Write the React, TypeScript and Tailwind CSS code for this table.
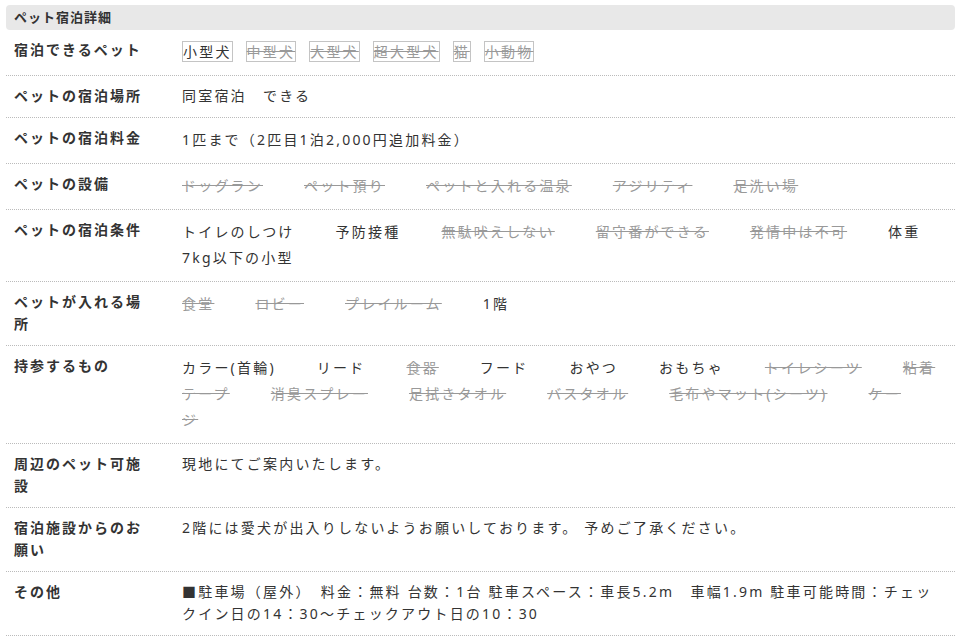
import type { ReactNode } from 'react';

type Item = { t: string; ok: boolean };

const item = (t: string, ok = true): Item => ({ t, ok });

interface Row {
  label: string;
  kind: 'tags' | 'list' | 'text';
  items?: Item[];
  text?: ReactNode;
}

const rows: Row[] = [
  {
    label: '宿泊できるペット',
    kind: 'tags',
    items: [
      item('小型犬'),
      item('中型犬', false),
      item('大型犬', false),
      item('超大型犬', false),
      item('猫', false),
      item('小動物', false),
    ],
  },
  { label: 'ペットの宿泊場所', kind: 'text', text: '同室宿泊　できる' },
  { label: 'ペットの宿泊料金', kind: 'list', items: [item('1匹まで（2匹目1泊2,000円追加料金）')] },
  {
    label: 'ペットの設備',
    kind: 'list',
    items: [
      item('ドッグラン', false),
      item('ペット預り', false),
      item('ペットと入れる温泉', false),
      item('アジリティ', false),
      item('足洗い場', false),
    ],
  },
  {
    label: 'ペットの宿泊条件',
    kind: 'list',
    items: [
      item('トイレのしつけ'),
      item('予防接種'),
      item('無駄吠えしない', false),
      item('留守番ができる', false),
      item('発情中は不可', false),
      item('体重7kg以下の小型'),
    ],
  },
  {
    label: 'ペットが入れる場所',
    kind: 'list',
    items: [item('食堂', false), item('ロビー', false), item('プレイルーム', false), item('1階')],
  },
  {
    label: '持参するもの',
    kind: 'list',
    items: [
      item('カラー(首輪)'),
      item('リード'),
      item('食器', false),
      item('フード'),
      item('おやつ'),
      item('おもちゃ'),
      item('トイレシーツ', false),
      item('粘着テープ', false),
      item('消臭スプレー', false),
      item('足拭きタオル', false),
      item('バスタオル', false),
      item('毛布やマット(シーツ)', false),
      item('ケージ', false),
    ],
  },
  { label: '周辺のペット可施設', kind: 'text', text: '現地にてご案内いたします。' },
  {
    label: '宿泊施設からのお願い',
    kind: 'text',
    text: '2階には愛犬が出入りしないようお願いしております。 予めご了承ください。',
  },
  {
    label: 'その他',
    kind: 'text',
    text: '■駐車場（屋外）　料金：無料 台数：1台 駐車スペース：車長5.2m　車幅1.9m 駐車可能時間：チェックイン日の14：30～チェックアウト日の10：30',
  },
];

function Value({ row }: { row: Row }) {
  if (row.kind === 'text') {
    return <div className="leading-[22px]">{row.text}</div>;
  }
  if (row.kind === 'tags') {
    return (
      <div className="leading-[26px]">
        {row.items!.map((it) => (
          <span
            key={it.t}
            className={
              it.ok
                ? 'mr-[13px] border border-[#c4c4c4] text-[#333]'
                : 'mr-[13px] border border-[#c4c4c4] text-[#999] line-through'
            }
          >
            {it.t}
          </span>
        ))}
      </div>
    );
  }
  // inline items: the trailing margin keeps with the last glyph, so long items wrap mid-word
  return (
    <div className="leading-[26px]">
      {row.items!.map((it) => (
        <span key={it.t} className={it.ok ? 'mr-[41px] text-[#333]' : 'mr-[41px] text-[#999] line-through'}>
          {it.t}
        </span>
      ))}
    </div>
  );
}

export default function App() {
  return (
    <div
      className="min-h-screen bg-white pt-[5px] pl-[6px] text-[14px] text-[#333]"
      style={{ fontFamily: '"Noto Sans", "Noto Sans CJK JP", sans-serif' }}
    >
      <div className="w-[949px]">
        {/* Header */}
        <div className="flex h-[25px] items-center rounded-[4px] bg-[#e8e8e8] pl-[8px] text-[13px] font-bold tracking-[1px] text-[#333]">
          ペット宿泊詳細
        </div>

        {rows.map((row) => (
          <div
            key={row.label}
            className="grid grid-cols-[176px_1fr] border-b border-dotted border-[#bbb] pt-[9px] pb-[10px]"
          >
            <div className="pl-[8px] pr-[32px] text-[14px] font-bold leading-[22px] tracking-[2px] text-[#333]">
              {row.label}
            </div>
            <div className="pr-[15px] tracking-[2.2px]">
              <Value row={row} />
            </div>
          </div>
        ))}
      </div>
    </div>
  );
}
